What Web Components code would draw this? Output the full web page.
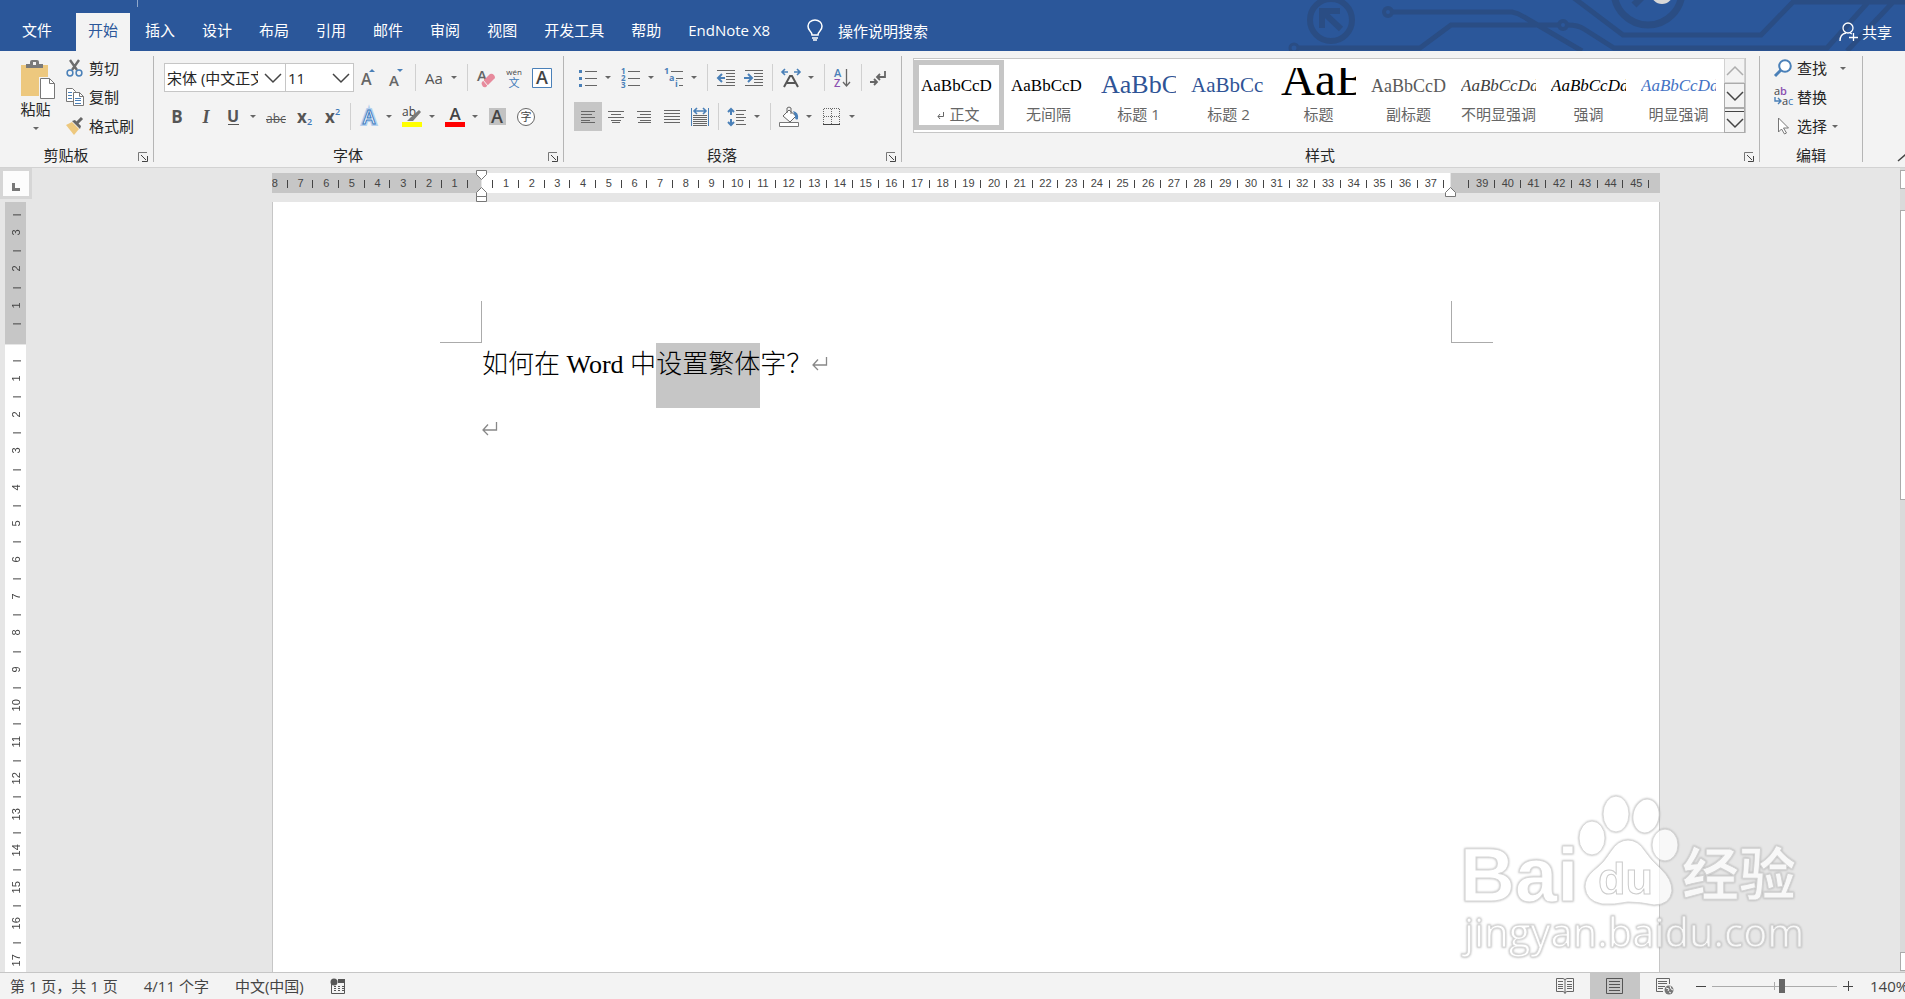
<!DOCTYPE html>
<html lang="zh-CN">
<head>
<meta charset="utf-8">
<title>Word</title>
<style>
  html, body { margin: 0; height: 100%; }
  body {
    font: 15px/20px "Open Sans", "Noto Sans CJK SC", sans-serif;
    color: #262626;
    overflow: hidden;
  }
</style>
</head>
<body>
<word-app></word-app>

<script>
// ---------- ICONS ----------
const LATIN = 'font-family="Open Sans, sans-serif"';
const lines = (rows, color = '#666') => rows
  .map(([x1, x2, y]) => `<path d="M${x1} ${y}.5H${x2}" stroke="${color}"/>`).join('');

const ICONS = {
  paste: [36, 40, `<path d="M1 5h27v31H1z" fill="#edc87e"/><path d="M6 8V4h4V2q0-2 2-2h5q2 0 2 2v2h4v4z" fill="#7a7a7a"/><path d="M13 2h3v3h-3z" fill="#f3f3f3"/><path d="M19 17h13l4 5v18H19z" fill="#f3f3f3"/><path d="M20.500 18.500h9l5 5v15h-14z" fill="#fff" stroke="#777"/><path d="M29.500 18.500v5h5" fill="none" stroke="#777"/>`],
  cut: [18, 18, `<path d="M4 1l7 10M13 1L6 11" stroke="#6d6d6d" stroke-width="2.400"/><circle cx="4" cy="14" r="2.900" fill="none" stroke="#4a80b8" stroke-width="1.500"/><circle cx="13" cy="14" r="2.900" fill="none" stroke="#4a80b8" stroke-width="1.500"/>`],
  copy: [18, 18, `<path d="M.5.500h6l3 3v10h-9z" fill="#fff" stroke="#777"/><path d="M2 4.500h4M2 7.500h4M2 10.500h4" stroke="#4a80b8"/><path d="M7.500 4.500h6l4 4v9h-10z" fill="#fff" stroke="#777"/><path d="M13.500 4.500v4h4" fill="none" stroke="#777"/><path d="M9 10.500h6M9 12.500h6M9 15.500h6" stroke="#4a80b8"/>`],
  brush: [18, 18, `<path d="M0 8l6-3 7 7-5 6z" fill="#edc87e"/><path d="M6 4l3-1 6 6-1 3z" fill="#666"/><path d="M11 6l5-5" stroke="#666" stroke-width="3"/>`],
  launch: [10, 10, `<path d="M.5 9V.500H9" fill="none" stroke="#777"/><path d="M3 3l5 5M9.500 4v5.500H4" fill="none" stroke="#444"/>`],
  chevron: [18, 10, `<path d="M1 1l8 8 8-8" fill="none" stroke="#444" stroke-width="1.500"/>`],
  grow: [18, 20, `<text x="1" y="17" font-size="16" font-weight="600" fill="#666" ${LATIN}>A</text><path d="M9 4l3-3 3 3z" fill="#4a80b8"/>`],
  shrink: [18, 20, `<text x="1" y="18" font-size="15" font-weight="600" fill="#666" ${LATIN}>A</text><path d="M9 1h6l-3 3z" fill="#4a80b8"/>`],
  case: [20, 18, `<text x="1" y="15" font-size="15" fill="#555" ${LATIN}>Aa</text>`],
  clear: [20, 20, `<text x="1" y="13" font-size="15" font-weight="600" fill="#666" ${LATIN}>A</text><path d="M6 14l8-8q2-1 4 1l1 2q0 2-1 2l-8 8q-3 1-4-2-1-2 0-3z" fill="#e78a9c"/><path d="M7 12l5 6" stroke="#f3f3f3"/>`],
  phonetic: [20, 22, `<text x="10" y="8" text-anchor="middle" font-size="8" fill="#444" ${LATIN}>wén</text><text x="10" y="20" text-anchor="middle" font-size="11" fill="#3b78b8" font-family="Noto Sans CJK SC, sans-serif">文</text>`],
  charborder: [20, 20, `<path d="M.5.500h19v19H.5z" fill="#fff" stroke="#4a80b8"/><text x="10" y="16" text-anchor="middle" font-size="18" font-weight="600" fill="#444" ${LATIN}>A</text>`],
  bold: [18, 20, `<text x="9" y="16" text-anchor="middle" font-size="17" font-weight="700" fill="#555" ${LATIN}>B</text>`],
  italic: [18, 20, `<text x="10" y="16" text-anchor="middle" font-size="18" font-weight="700" font-style="italic" fill="#555" font-family="Liberation Serif, serif">I</text>`],
  underline: [18, 20, `<text x="9" y="15" text-anchor="middle" font-size="16" font-weight="700" fill="#555" ${LATIN}>U</text><path d="M4 17.500h11" stroke="#555"/>`],
  strike: [22, 20, `<text x="11" y="16" text-anchor="middle" font-size="12" fill="#555" ${LATIN}>abc</text><path d="M1 12.500h20" stroke="#555"/>`],
  sub: [20, 20, `<text x="3" y="16" font-size="17" font-weight="700" fill="#555" ${LATIN}>x</text><text x="13" y="18" font-size="9" font-weight="600" fill="#3b78b8" ${LATIN}>2</text>`],
  sup: [20, 20, `<text x="3" y="16" font-size="17" font-weight="700" fill="#555" ${LATIN}>x</text><text x="13" y="8" font-size="9" font-weight="600" fill="#3b78b8" ${LATIN}>2</text>`],
  effects: [20, 22, `<text x="10" y="18" text-anchor="middle" font-size="19" font-weight="600" fill="#fff" stroke="#b5d0ee" stroke-width="4" paint-order="stroke" ${LATIN}>A</text><text x="10" y="18" text-anchor="middle" font-size="19" font-weight="600" fill="#fff" stroke="#3d7bbf" stroke-width="1" ${LATIN}>A</text>`],
  highlight: [20, 22, `<text x="0" y="10" font-size="12" fill="#444" ${LATIN}>ab</text><path d="M8 12l9-8 2 2-8 9zM5 15l3-3 3 3z" fill="#7a7a7a"/><path d="M0 16h20v5H0z" fill="#ff0"/>`],
  color: [20, 22, `<text x="10" y="14" text-anchor="middle" font-size="17" font-weight="600" fill="#444" ${LATIN}>A</text><path d="M0 16h20v5H0z" fill="red"/>`],
  shade: [18, 18, `<path d="M0 0h17v17H0z" fill="#c2c2c2"/><text x="8" y="15" text-anchor="middle" font-size="18" font-weight="600" fill="#444" ${LATIN}>A</text>`],
  enclose: [20, 20, `<circle cx="10" cy="10" r="8.500" fill="#fff" stroke="#666"/><text x="10" y="14" text-anchor="middle" font-size="11" fill="#444" font-family="Noto Sans CJK SC, sans-serif">字</text>`],
  bullets: [20, 20, `<path d="M1 2h3v3H1zM1 9h3v3H1zM1 16h3v3H1z" fill="#4a80b8"/>` + lines([[7, 19, 3], [7, 19, 10], [7, 19, 17]])],
  numbers: [20, 22, [1, 2, 3].map(n => `<text x="0" y="${n * 7}" font-size="8" font-weight="700" fill="#4a80b8" ${LATIN}>${n}</text>`).join('') + lines([[7, 19, 4], [7, 19, 11], [7, 19, 18]])],
  multi: [20, 22, `<g font-size="9" font-weight="700" fill="#4a80b8" ${LATIN}><text x="0" y="7">1</text><text x="5" y="14">a</text><text x="11" y="20">i</text></g>` + lines([[7, 19, 4], [12, 19, 11], [15, 19, 18]])],
  outdent: [20, 18, lines([[1, 19, 1], [10, 19, 4], [10, 19, 7], [10, 19, 10], [10, 19, 13], [1, 19, 16]]) + `<path d="M9 9H2M6 5L2 9l4 4" fill="none" stroke="#4a80b8" stroke-width="2"/>`],
  indent: [20, 18, lines([[1, 19, 1], [10, 19, 4], [10, 19, 7], [10, 19, 10], [10, 19, 13], [1, 19, 16]]) + `<path d="M0 9h7M4 5l4 4-4 4" fill="none" stroke="#4a80b8" stroke-width="2"/>`],
  asian: [20, 20, `<path d="M3 19l6-11h2l6 11M6 15h8" fill="none" stroke="#555" stroke-width="2"/><path d="M1 4h6M13 4h6M4 1L1 4l3 3M16 1l3 3-3 3" fill="none" stroke="#4a80b8" stroke-width="1.600"/>`],
  sort: [18, 20, `<g font-size="11" font-weight="600" ${LATIN}><text x="0" y="9" fill="#4a80b8">A</text><text x="0" y="19" fill="#8a4fb0">Z</text></g><path d="M12.500 1v16M9 14l3.500 4 3.500-4" fill="none" stroke="#666" stroke-width="1.300"/>`],
  marks: [22, 18, `<path d="M16 2v6H9M11 5L8 8l3 3" fill="none" stroke="#666" stroke-width="1.800"/><path d="M1 13h7M5 10l3 3-3 3" fill="none" stroke="#666" stroke-width="1.800"/>`],
  left: [18, 18, lines([[2, 16, 3], [2, 13, 6], [2, 16, 9], [2, 11, 12], [2, 16, 14]])],
  center: [18, 18, lines([[1, 17, 3], [4, 14, 6], [1, 17, 9], [4, 14, 12], [5, 13, 14]])],
  right: [18, 18, lines([[2, 16, 3], [5, 16, 6], [2, 16, 9], [5, 16, 12], [3, 16, 14]])],
  justify: [18, 18, lines([[1, 17, 2], [1, 17, 5], [1, 17, 8], [1, 17, 11], [1, 17, 14]])],
  distribute: [20, 20, `<path d="M1.500 1v18M18.500 1v18" stroke="#4a80b8"/><path d="M4 4h12M7 1L4 4l3 3M13 1l3 3-3 3" fill="none" stroke="#4a80b8" stroke-width="1.600"/>` + lines([[3, 17, 8], [3, 17, 10], [3, 17, 12], [3, 17, 14], [3, 17, 16], [3, 17, 18]])],
  spacing: [20, 20, `<path d="M4 2v6M1 5l3-3 3 3M4 12v6M1 15l3 3 3-3" fill="none" stroke="#4a80b8" stroke-width="2"/>` + lines([[9, 19, 3], [9, 17, 7], [9, 19, 10], [9, 17, 13], [9, 19, 17]])],
  fill: [20, 22, `<path d="M4 10l6-6 7 6-6 6z" fill="#fff" stroke="#666"/><path d="M8 7V2q2-2 4 0v6" fill="none" stroke="#666"/><path d="M14 5q6 1 5 8-3 2-3-3z" fill="#4a80b8"/><path d="M.5 16.500h19v4H.5z" fill="#fff" stroke="#777"/>`],
  borders: [18, 18, `<path d="M.5 1v15M8.500 1v15M16.500 1v15M1 .5h16M1 8.500h16" stroke="#666" stroke-dasharray="1 1"/><path d="M0 16.500h17" stroke="#444"/>`],
  find: [18, 18, `<circle cx="11" cy="7" r="5.800" fill="#fff" stroke="#4a80b8" stroke-width="2"/><path d="M7 11l-6 6" stroke="#4a80b8" stroke-width="3"/>`],
  replace: [20, 20, `<g font-size="11" ${LATIN}><text x="0" y="8" fill="#444">a</text><text x="6" y="8" fill="#8a4fb0" font-weight="600">b</text><text x="8" y="18" fill="#444">a</text><text x="14" y="18" fill="#3b78b8">c</text></g><path d="M1 10v4h5M4 11l3 3-3 3" fill="none" stroke="#4a80b8" stroke-width="1.400"/>`],
  select: [18, 18, `<path d="M4.500 1v14l3-3 3 5 2-1-3-5h5z" fill="#fff" stroke="#777"/>`],
  collapse: [16, 8, `<path d="M1 7l7-6 7 6" fill="none" stroke="#444" stroke-width="1.500"/>`],
  bulb: [18, 22, `<path d="M6 15q0-2-2-4-2-2-2-5a7 6 0 0 1 14 0q0 3-2 5-2 2-2 4zM6 18h6M7 20h4" fill="none" stroke="#fff" stroke-width="1.500"/>`],
  share: [20, 20, `<circle cx="9" cy="6" r="5" fill="none" stroke="#fff" stroke-width="1.300"/><path d="M1 19q0-7 6-8M11 11l2 1M14.500 11v8M10 15.500h9" fill="none" stroke="#fff" stroke-width="1.300"/>`],
  enter: [16, 14, `<path d="M14.500 0v8H1M6 2.500L1 8l5 5" fill="none" stroke="#888" stroke-width="1.300"/>`],
  book: [18, 16, `<path d="M.5.500H7l2 1 2-1h6.500v13H11l-2 1-2-1H.5zM9 1v15" fill="none" stroke="#666"/>` + lines([[2, 7, 3], [2, 7, 6], [2, 7, 8], [2, 7, 10], [11, 16, 3], [11, 16, 6], [11, 16, 8], [11, 16, 10]])],
  print: [18, 16, `<path d="M.5.500h16v15H.5z" fill="none" stroke="#555"/>` + lines([[3, 14, 3], [3, 14, 6], [3, 14, 9], [3, 14, 12]], '#555')],
  web: [18, 17, `<path d="M13.500 6V.500H.5v13H7" fill="none" stroke="#666"/>` + lines([[2, 11, 3], [2, 11, 5], [2, 9, 8], [2, 7, 10]]) + `<circle cx="13" cy="12" r="4.500" fill="#777"/><path d="M10 10l3 1-1 2M14 8l1 3 2 1M13 14l2 1" fill="none" stroke="#f3f3f3"/>`],
  macro: [16, 16, `<path d="M1.500 6v9.500h13V5" fill="none" stroke="#555"/><path d="M8 1h7v4H8z" fill="#555"/><circle cx="4" cy="4" r="3.500" fill="#555"/><path d="M4 8.500h10M4 10.500h10M4 12.500h10" stroke="#555" stroke-dasharray="2 2"/>`]
};

function icon(name) {
  const [w, h, body] = ICONS[name];
  return `<svg width="${w}" height="${h}" viewBox="0 0 ${w} ${h}" fill="none" aria-hidden="true">${body}</svg>`;
}

const RESET = `
  * { box-sizing: border-box; }
  svg { display: block; flex: none; overflow: visible; }
  button, select { font: inherit; color: inherit; background: none; border: 0; padding: 0; margin: 0; }
`;

// Base class: every element renders its markup into an open shadow root
class WordElement extends HTMLElement {
  constructor() {
    super();
    this.attachShadow({ mode: 'open' });
  }

  connectedCallback() {
    this.shadowRoot.innerHTML = `<style>${RESET}${this.styles()}</style>${this.render()}`;
  }

  attr(name) { return this.getAttribute(name) || ''; }
  styles() { return ''; }
  render() { return '<slot></slot>'; }
}

// ---------- RIBBON PARTS ----------
class RibbonTab extends WordElement {
  styles() {
    return `
      :host { display: flex; }
      button { padding: 0 12px 4px; color: #fff; white-space: nowrap; }
      :host([active]) button { background: #f3f3f3; color: #2b579a; }
    `;
  }
  render() {
    return `<button type="button"><slot></slot></button>`;
  }
}

class ToolButton extends WordElement {
  styles() {
    return `
      :host { display: block; }
      button { display: flex; align-items: center; height: 29px; }
      .icon { display: flex; justify-content: center; width: 28px; }
      .arrow { width: 12px; margin: 0 0 0 3px; }
      .arrow::before { content: ''; display: block; width: 0; border: 3px solid transparent; border-top-color: #666; border-bottom: 0; }
      :host([pressed]) button { background: #c6c6c6; }
    `;
  }
  render() {
    const drop = this.hasAttribute('drop') ? '<span class="arrow"></span>' : '';
    return `<button type="button" aria-label="${this.attr('label')}"><span class="icon">${icon(this.attr('icon'))}</span>${drop}</button>`;
  }
}

class ToolLabel extends WordElement {
  styles() {
    return `
      :host { display: block; }
      button { display: flex; align-items: center; gap: 3px; height: 29px; padding-bottom: 5px; white-space: nowrap; }
      .icon { width: 20px; }
      .arrow { width: 0; margin-left: 2px; border: 3px solid transparent; border-top-color: #666; border-bottom: 0; }
      :host([drop="wide"]) .arrow { margin-left: 10px; }
    `;
  }
  render() {
    const drop = this.hasAttribute('drop') ? '<span class="arrow"></span>' : '';
    return `<button type="button"><span class="icon">${icon(this.attr('icon'))}</span><slot></slot>${drop}</button>`;
  }
}

class ToolCombo extends WordElement {
  styles() {
    return `
      :host { display: block; }
      label { display: block; position: relative; }
      select { appearance: none; width: 100%; height: 29px; padding: 0 27px 0 2px; background: #fff; border: 1px solid #c6c6c6; border-radius: 0; }
      svg { position: absolute; right: 4px; top: 10px; pointer-events: none; }
    `;
  }
  render() {
    return `<label><select aria-label="${this.attr('label')}"><option>${this.attr('value')}</option></select>${icon('chevron')}</label>`;
  }
}

class RibbonGroup extends WordElement {
  styles() {
    return `
      :host { display: flex; flex: none; flex-direction: column; margin: 5px 0; border-right: 1px solid #b5b5b5; }
      .body { flex: 1; }
      footer { display: flex; align-items: center; height: 15px; }
      .name { flex: 1; text-align: center; }
      button { width: 21px; padding: 4px 0 0 6px; }
    `;
  }
  render() {
    const launcher = this.hasAttribute('launcher')
      ? `<button type="button" aria-label="${this.attr('name')}设置">${icon('launch')}</button>` : '';
    return `<div class="body"><slot></slot></div><footer><span class="name">${this.attr('name')}</span>${launcher}</footer>`;
  }
}

class ToolRow extends WordElement {
  styles() {
    return `
      :host { display: flex; align-items: center; height: 29px; margin-bottom: 10px; }
      ::slotted(hr) { width: 1px; height: 27px; margin: 0 4px; border: 0; background: #d0d0d0; }
    `;
  }
}

class StyleTile extends WordElement {
  styles() {
    return `
      :host { display: block; width: 90px; }
      button { display: block; width: 100%; height: 70px; padding: 3px 3px 3px 2px; border: 5px solid transparent; }
      :host([selected]) button { border-color: #c6c6c6; }
      .sample { display: block; height: 35px; overflow: hidden; font: 17px/36px "Liberation Serif", serif; color: #000; text-align: left; white-space: nowrap; }
      .name { display: flex; justify-content: center; align-items: center; gap: 4px; margin-top: 1px; color: #666; line-height: 20px; white-space: nowrap; }
      .h1 { font-size: 26px; line-height: 34px; color: #2f5496; }
      .h2 { font-size: 21px; line-height: 34px; color: #2f5496; }
      .title { font-size: 47px; line-height: 22px; }
      .subtitle { font-size: 18px; color: #5a5a5a; }
      .subtle, .strong, .intense { font-style: italic; }
      .subtle { color: #404040; }
      .intense { color: #4472c4; }
      svg { width: 8px; height: 7px; margin-top: 3px; }
    `;
  }
  render() {
    const mark = this.hasAttribute('selected')
      ? '<svg viewBox="0 0 8 7" fill="none" aria-hidden="true"><path d="M6.500 0v4.500H1M3 2L1 4.500 3 7" stroke="#666"/></svg>' : '';
    return `<button type="button"><span class="sample ${this.attr('kind')}">${this.attr('sample')}</span><span class="name">${mark}<slot></slot></span></button>`;
  }
}

class StyleGallery extends WordElement {
  styles() {
    return `
      :host { display: flex; height: 75px; background: #fff; border: 1px solid #c6c6c6; }
      .tiles { display: flex; padding-top: 1px; }
      .scroll { display: grid; grid-template-rows: 25px 25px 25px; width: 21px; margin: -1px -1px -1px 0; }
      .scroll button { display: flex; justify-content: center; align-items: center; background: #f3f3f3; border: 1px solid #ababab; }
      .scroll .up { border-color: #d2d2d2; }
      .up svg { transform: rotate(180deg); opacity: .4; }
      .scroll button:last-child { box-shadow: inset 0 2px #f3f3f3, inset 0 3px #444; padding-top: 4px; }
    `;
  }
  render() {
    return `
      <div class="tiles"><slot></slot></div>
      <div class="scroll">
        <button type="button" class="up" aria-label="上一行">${icon('chevron')}</button>
        <button type="button" aria-label="下一行">${icon('chevron')}</button>
        <button type="button" aria-label="其他">${icon('chevron')}</button>
      </div>`;
  }
}

// ---------- TITLE + TABS ----------
class WordHeader extends WordElement {
  styles() {
    return `
      :host { display: flex; position: relative; flex: none; height: 51px; padding-top: 13px; background: #2b579a; color: #fff; }
      .art { position: absolute; top: 0; right: 0; overflow: hidden; }
      nav { display: flex; gap: 3px; }
      .file { margin: 0 9px 0 10px; }
      .divider { position: absolute; left: 137px; top: 0; width: 1px; height: 7px; background: #8fa8cc; }
      button { display: flex; align-items: center; position: relative; color: #fff; white-space: nowrap; }
      .tell { gap: 14px; margin-left: 24px; padding-bottom: 2px; }
      .share { gap: 3px; margin-left: auto; padding: 0 13px 0 0; }
    `;
  }
  render() {
    const tabs = ['开始', '插入', '设计', '布局', '引用', '邮件', '审阅', '视图', '开发工具', '帮助', 'EndNote X8'];
    return `
      <svg class="art" width="617" height="51" viewBox="0 0 617 51" fill="none" stroke="#2a4d84" stroke-width="5">
        <circle cx="43" cy="20" r="21" stroke-width="6"/>
        <path d="M31 11h21M34 8v20M35 12l18 17" stroke-width="6"/>
        <circle cx="6" cy="48" r="4" stroke-width="3"/>
        <circle cx="100" cy="12" r="4" stroke-width="4"/>
        <circle cx="275" cy="25" r="4" stroke-width="4"/>
        <path d="M11 48h121l31-23h108M105 12h119q6 1 12 5l58 34M280 25q10 0 16 4l30 19h213l43-48M286-2l49 37h138l32-33h112M559 51l48-51"/>
        <circle cx="360" cy="-9" r="34" stroke-width="7"/>
        <path d="M346 5l13-13" stroke-width="7"/>
        <circle cx="374" cy="-7" r="11" fill="#d8d8d8" stroke="none"/>
      </svg>
      <span class="divider"></span>
      <nav>
        <ribbon-tab class="file">文件</ribbon-tab>
        ${tabs.map((t, i) => `<ribbon-tab${i === 0 ? ' active' : ''}>${t}</ribbon-tab>`).join('')}
      </nav>
      <button type="button" class="tell">${icon('bulb')}操作说明搜索</button>
      <button type="button" class="share">${icon('share')}共享</button>`;
  }
}

class WordRibbon extends WordElement {
  styles() {
    return `
      :host { display: flex; flex: none; position: relative; height: 117px; background: #f3f3f3; border-bottom: 1px solid #d2d2d2; }
      .clip { display: flex; padding-left: 20px; }
      .clip div { margin-left: 15px; }
      .paste { display: flex; flex-direction: column; align-items: center; width: 31px; padding-top: 4px; line-height: 18px; white-space: nowrap; }
      .paste svg { margin-left: 5px; }
      .paste i { width: 0; margin-top: 9px; border: 3px solid transparent; border-top-color: #666; border-bottom: 0; }
      .tools { padding-top: 7px; }
      .font-group { width: 410px; }
      .font-group tool-row { padding-left: 9px; }
      .font-group tool-row:first-of-type { padding-left: 10px; }
      .font-name { width: 122px; }
      .font-size { width: 69px; margin: 0 1px 0 -1px; }
      .clip-group { width: 154px; }
      .para-group { width: 338px; }
      .para-group tool-row { padding-left: 10px; }
      .styles-group { width: 858px; }
      style-gallery { margin: 2px 13px 0 11px; }
      .edit-group { width: 103px; }
      .edit { padding-left: 14px; }
      .collapse { position: absolute; right: -8px; bottom: 5px; }
    `;
  }
  tool(name, label, flags = '') {
    return `<tool-button icon="${name}" label="${label}" ${flags}></tool-button>`;
  }
  render() {
    const t = this.tool;
    const tiles = [
      ['正文', '', 'AaBbCcD'], ['无间隔', '', 'AaBbCcD'], ['标题 1', 'h1', 'AaBbC'],
      ['标题 2', 'h2', 'AaBbCc'], ['标题', 'title', 'AaB'], ['副标题', 'subtitle', 'AaBbCcD'],
      ['不明显强调', 'subtle', 'AaBbCcDd'], ['强调', 'strong', 'AaBbCcDd'], ['明显强调', 'intense', 'AaBbCcDd']
    ];
    return `
      <ribbon-group class="clip-group" name="剪贴板" launcher>
        <div class="clip">
          <button type="button" class="paste">${icon('paste')}<span>粘贴</span><i></i></button>
          <div>
            <tool-label icon="cut">剪切</tool-label>
            <tool-label icon="copy">复制</tool-label>
            <tool-label icon="brush">格式刷</tool-label>
          </div>
        </div>
      </ribbon-group>
      <ribbon-group class="font-group" name="字体" launcher>
        <div class="tools">
          <tool-row>
            <tool-combo class="font-name" label="字体" value="宋体 (中文正文)"></tool-combo>
            <tool-combo class="font-size" label="字号" value="11"></tool-combo>
            ${t('grow', '增大字号')}${t('shrink', '减小字号')}<hr>
            ${t('case', '更改大小写', 'drop')}<hr>
            ${t('clear', '清除格式')}${t('phonetic', '拼音指南')}${t('charborder', '字符边框')}
          </tool-row>
          <tool-row>
            ${t('bold', '加粗')}${t('italic', '倾斜')}${t('underline', '下划线', 'drop')}${t('strike', '删除线')}${t('sub', '下标')}${t('sup', '上标')}<hr>
            ${t('effects', '文本效果', 'drop')}${t('highlight', '突出显示', 'drop')}${t('color', '字体颜色', 'drop')}${t('shade', '字符底纹')}${t('enclose', '带圈字符')}
          </tool-row>
        </div>
      </ribbon-group>
      <ribbon-group class="para-group" name="段落" launcher>
        <div class="tools">
          <tool-row>
            ${t('bullets', '项目符号', 'drop')}${t('numbers', '编号', 'drop')}${t('multi', '多级列表', 'drop')}<hr>
            ${t('outdent', '减少缩进量')}${t('indent', '增加缩进量')}<hr>
            ${t('asian', '中文版式', 'drop')}<hr>${t('sort', '排序')}<hr>${t('marks', '显示编辑标记')}
          </tool-row>
          <tool-row>
            ${t('left', '左对齐', 'pressed')}${t('center', '居中')}${t('right', '右对齐')}${t('justify', '两端对齐')}${t('distribute', '分散对齐')}<hr>
            ${t('spacing', '行距', 'drop')}<hr>${t('fill', '底纹', 'drop')}${t('borders', '边框', 'drop')}
          </tool-row>
        </div>
      </ribbon-group>
      <ribbon-group class="styles-group" name="样式" launcher>
        <style-gallery>
          ${tiles.map(([n, k, s], i) => `<style-tile kind="${k}" sample="${s}"${i === 0 ? ' selected' : ''}>${n}</style-tile>`).join('')}
        </style-gallery>
      </ribbon-group>
      <ribbon-group class="edit-group" name="编辑">
        <div class="edit">
          <tool-label icon="find" drop="wide">查找</tool-label>
          <tool-label icon="replace">替换</tool-label>
          <tool-label icon="select" drop>选择</tool-label>
        </div>
      </ribbon-group>
      <button type="button" class="collapse" aria-label="折叠功能区">${icon('collapse')}</button>`;
  }
}

// ---------- RULERS ----------
class WordRuler extends WordElement {
  styles() {
    return `
      :host { display: grid; overflow: hidden; font: 11px/20px "Liberation Sans", sans-serif; color: #444; }
      .band, .track { grid-area: 1 / 1; display: flex; min-width: 0; min-height: 0; }
      .band i { background: #c6c6c6; }
      .band i.page { flex: 1; background: #fff; }
      .track span { flex: 1; min-width: 0; display: flex; align-items: center; justify-content: center; position: relative; }
      .track span::after { content: ''; position: absolute; background: #444; }
      :host([dir-x]) { height: 20px; line-height: 22px; }
      :host([dir-x]) .band i { width: 209px; }
      :host([dir-x]) .band { gap: 1px; }
      :host([dir-x]) .track { margin: 0 11px 0 -10px; }
      :host([dir-x]) .track span::after { right: 0; top: 7px; width: 1px; height: 8px; }
      :host([dir-y]) .band, :host([dir-y]) .track { flex-direction: column; }
      :host([dir-y]) .band i { height: 142px; }
      :host([dir-y]) .band i.page { margin-top: 1px; }
      :host([dir-y]) .track { height: 764px; margin-top: 12px; }
      :host([dir-y]) .track span { writing-mode: vertical-rl; transform: rotate(180deg); }
      :host([dir-y]) .track span::after { left: 5px; bottom: 0; width: 8px; height: 1px; }
    `;
  }
  render() {
    const from = Number(this.attr('from'));
    const to = Number(this.attr('to'));
    const skip = this.attr('skip').split(',').map(Number);
    const cells = [];
    for (let n = from; n <= to; n++) {
      cells.push(`<span>${skip.includes(n) ? '' : Math.abs(n)}</span>`);
    }
    const tail = this.hasAttribute('dir-x') ? '<i></i>' : '';
    return `<div class="band"><i></i><i class="page"></i>${tail}</div><div class="track">${cells.join('')}</div>`;
  }
}

// ---------- DOCUMENT ----------
class WordPage extends WordElement {
  styles() {
    return `
      :host { display: block; position: relative; flex: 1; background: #fff; border: solid #c6c6c6; border-width: 0 1px; padding: 141px 209px 0; }
      .corner { position: absolute; top: 99px; width: 42px; height: 42px; border-bottom: 1px solid #ababab; }
      .tl { left: 167px; border-right: 1px solid #ababab; }
      .tr { right: 166px; border-left: 1px solid #ababab; }
      ::slotted(p) { display: flex; align-items: flex-start; height: 65px; margin: 0; font: 26px/43px "Liberation Serif", "Noto Sans CJK SC", serif; font-weight: 300; color: #000; white-space: pre; }
    `;
  }
  render() {
    return `<i class="corner tl"></i><i class="corner tr"></i><slot></slot>`;
  }
}

class BaiduMark extends WordElement {
  styles() {
    return `
      :host { display: block; position: absolute; right: 100px; bottom: 9px; opacity: .75; pointer-events: none; }
      svg { filter: drop-shadow(0 0 1px #999); }
    `;
  }
  render() {
    return `
      <svg width="345" height="170" viewBox="0 0 345 170" fill="#fff" stroke="#ccc" stroke-width="1">
        <text x="0" y="108" font-size="76" font-weight="700" font-family="Liberation Sans, sans-serif">Bai</text>
        <ellipse cx="132" cy="45" rx="13" ry="17"/>
        <ellipse cx="156" cy="21" rx="13" ry="18"/>
        <ellipse cx="186" cy="23" rx="13" ry="17" transform="rotate(10 186 23)"/>
        <ellipse cx="205" cy="52" rx="13" ry="16"/>
        <path d="M168 47q10 0 17 11 6 9 16 18 11 10 11 22-2 14-18 14-14-3-26-3-14 3-26 2-16-3-17-17 0-9 8-16 11-8 18-20 7-11 17-11z"/>
        <text x="138" y="101" font-size="45" font-weight="700" stroke="#bbb" font-family="Liberation Sans, sans-serif">du</text>
        <text x="222" y="102" font-size="57" font-weight="700" font-family="Noto Sans CJK SC, sans-serif">经验</text>
        <text x="4" y="154" font-size="40" font-family="Open Sans, sans-serif">jingyan.baidu.com</text>
      </svg>`;
  }
}

class WordWorkspace extends WordElement {
  styles() {
    return `
      :host { display: flex; flex: 1; position: relative; min-height: 0; overflow: hidden; background: #e6e6e6; }
      .side { display: flex; flex-direction: column; width: 32px; flex: none; }
      .tabstop { height: 31px; margin-bottom: 3px; border: 3px solid #d6d6d6; background: #fcfcfc; }
      .tabstop i { display: block; width: 8px; height: 8px; margin: 6px 0 0 9px; border: solid #777; border-width: 0 0 3px 3px; }
      word-ruler[dir-y] { flex: 1; min-height: 0; width: 21px; margin-left: 5px; }
      .center { display: flex; flex: 1; flex-direction: column; min-width: 0; max-width: 1388px; margin: 0 auto; }
      .top { position: relative; margin: 5px 0 9px; }
      .top svg { position: absolute; }
      .start { left: 204px; top: -3px; }
      .end { right: 203px; top: 14px; }
      .bar { display: flex; flex-direction: column; width: 5px; background: #dadada; padding: 2px 0 1px; overflow: hidden; }
      .bar i { flex: none; width: 17px; height: 19px; background: #fff; border: 1px solid #ababab; }
      .bar .thumb { height: 290px; margin: 21px 0 auto; }
      .sel { height: 65px; background: #c6c6c6; }
      p svg { margin-top: 14px; }
    `;
  }
  render() {
    return `
      <div class="side">
        <button type="button" class="tabstop" aria-label="制表符"><i></i></button>
        <word-ruler dir-y from="-3" to="17" skip="0"></word-ruler>
      </div>
      <div class="center">
        <div class="top">
          <word-ruler dir-x from="-8" to="45" skip="0,38"></word-ruler>
          <svg class="start" width="12" height="33" viewBox="0 0 12 33" fill="#fff" stroke="#777"><path d="M.5.500h10v4l-5 5-5-5zM.5 26.500v-4l5-5 5 5v4zM.5 26.500h10v5H.5z"/></svg>
          <svg class="end" width="12" height="10" viewBox="0 0 12 10" fill="#fff" stroke="#777"><path d="M.5 9.500v-4l5-5 5 5v4z"/></svg>
        </div>
        <word-page>
          <p>如何在 Word 中<span class="sel">设置繁体</span>字？${icon('enter')}</p>
          <p>${icon('enter')}</p>
        </word-page>
      </div>
      <div class="bar"><i></i><i class="thumb"></i><i></i></div>
      <baidu-mark></baidu-mark>`;
  }
}

// ---------- STATUS BAR ----------
class WordStatus extends WordElement {
  styles() {
    return `
      :host { display: flex; align-items: stretch; flex: none; height: 27px; box-sizing: border-box; padding-left: 10px; background: #f3f3f3; border-top: 1px solid #c6c6c6; color: #444; white-space: nowrap; overflow: hidden; }
      .info { display: flex; align-items: center; gap: 26px; }
      .views { display: flex; margin: 0 6px 0 auto; }
      .views button { display: flex; align-items: center; justify-content: center; width: 50px; }
      .views .on { background: #c6c6c6; }
      .zoom { display: flex; align-items: center; gap: 6px; }
      .zoom button { width: 10px; height: 10px; background: linear-gradient(#444, #444) center / 10px 1px no-repeat; }
      .zoom .plus { background: linear-gradient(#444, #444) center / 10px 1px no-repeat, linear-gradient(#444, #444) center / 1px 10px no-repeat; }
      input { appearance: none; width: 125px; height: 14px; margin: 0; background: linear-gradient(#ababab, #ababab) center / 100% 1px no-repeat, linear-gradient(#ababab, #ababab) center / 1px 8px no-repeat; }
      input::-webkit-slider-thumb { appearance: none; width: 6px; height: 14px; background: #666; }
      .percent { width: 35px; margin-left: 11px; overflow: hidden; }
    `;
  }
  render() {
    return `
      <div class="info"><span>第 1 页，共 1 页</span><span>4/11 个字</span><span>中文(中国)</span>${icon('macro')}</div>
      <div class="views">
        <button type="button" aria-label="阅读视图">${icon('book')}</button>
        <button type="button" class="on" aria-label="页面视图">${icon('print')}</button>
        <button type="button" aria-label="Web 版式视图">${icon('web')}</button>
      </div>
      <div class="zoom">
        <button type="button" aria-label="缩小"></button>
        <input type="range" min="0" max="100" value="56" aria-label="缩放">
        <button type="button" class="plus" aria-label="放大"></button>
        <span class="percent">140%</span>
      </div>`;
  }
}

class WordApp extends WordElement {
  styles() {
    return `:host { display: flex; flex-direction: column; height: 100vh; overflow: hidden; }
      word-header, word-ribbon { box-sizing: border-box; }`;
  }
  render() {
    return `<word-header></word-header><word-ribbon></word-ribbon><word-workspace></word-workspace><word-status></word-status>`;
  }
}

customElements.define('ribbon-tab', RibbonTab);
customElements.define('tool-button', ToolButton);
customElements.define('tool-label', ToolLabel);
customElements.define('tool-combo', ToolCombo);
customElements.define('tool-row', ToolRow);
customElements.define('ribbon-group', RibbonGroup);
customElements.define('style-tile', StyleTile);
customElements.define('style-gallery', StyleGallery);
customElements.define('word-header', WordHeader);
customElements.define('word-ribbon', WordRibbon);
customElements.define('word-ruler', WordRuler);
customElements.define('word-page', WordPage);
customElements.define('baidu-mark', BaiduMark);
customElements.define('word-workspace', WordWorkspace);
customElements.define('word-status', WordStatus);
customElements.define('word-app', WordApp);
</script>
</body>
</html>
